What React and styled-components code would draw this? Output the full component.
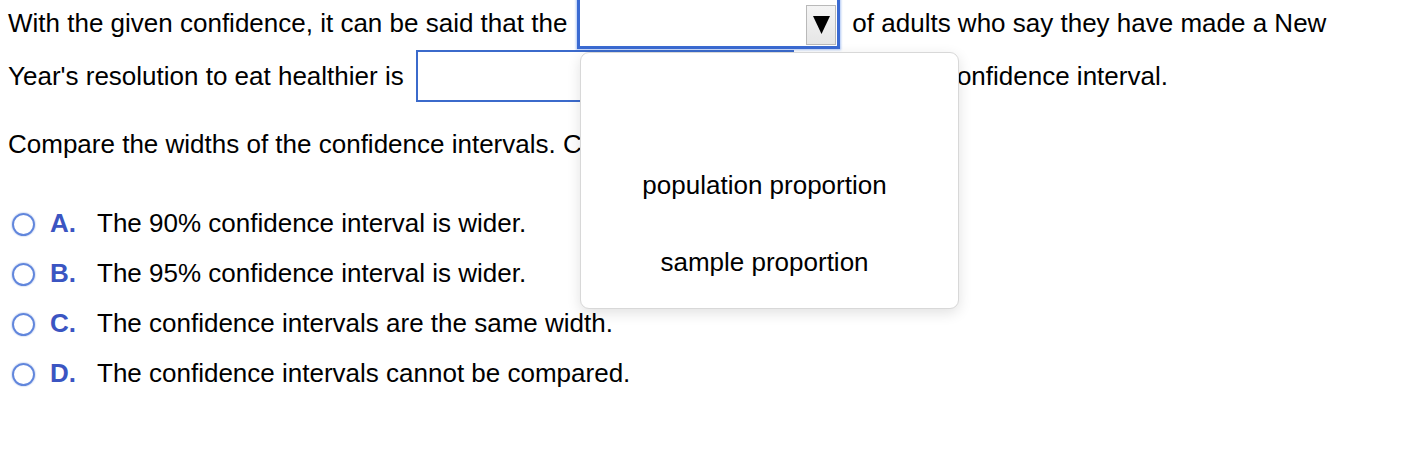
import React from "react";
import styled, { createGlobalStyle } from "styled-components";

const Global = createGlobalStyle`
  html, body { margin: 0; padding: 0; background: #fff; }
  body {
    font-family: "Liberation Sans", Arial, Helvetica, sans-serif;
    font-size: 26px;
    color: #000;
    overflow: hidden;
  }
`;

const Page = styled.div`
  position: relative;
  width: 1408px;
  height: 450px;
  padding: 0 8px;
  box-sizing: border-box;
`;

const Content = styled.div`
  margin-top: -3px;
  display: flex;
  flex-direction: column;
`;

const Line = styled.div`
  display: flex;
  align-items: center;
  height: 52px;
  margin-bottom: ${(p) => p.$gap || 0}px;
  white-space: pre;
`;

const SelectBox = styled.div`
  box-sizing: border-box;
  width: ${(p) => p.$w}px;
  height: 52px;
  flex: none;
  margin: 0 ${(p) => p.$mr || 6}px 0 ${(p) => p.$ml || 6}px;
  border: ${(p) => (p.$focus ? "3px solid #3a6ad2" : "2px solid #3b6acb")};
  box-shadow: ${(p) => (p.$focus ? "0 0 2px 1px rgba(80,130,230,0.45)" : "none")};
  background: #fff;
  display: flex;
  align-items: center;
  justify-content: flex-end;
  padding-right: 1px;
`;

const ArrowButton = styled.div`
  box-sizing: border-box;
  width: 30px;
  height: 40px;
  margin-top: 4px;
  border: 1px solid #b9b9b9;
  background: linear-gradient(#f4f4f4, #e6e6e6);
  display: flex;
  align-items: center;
  justify-content: center;
`;

const Question = styled.div`
  height: 52px;
  display: flex;
  align-items: center;
  white-space: pre;
  margin-top: 16px;
  margin-bottom: 28px;
`;

const Options = styled.div`
  display: flex;
  flex-direction: column;
`;

const Option = styled.div`
  display: flex;
  align-items: center;
  height: 50px;
  white-space: pre;
`;

const Radio = styled.span`
  box-sizing: border-box;
  width: 23px;
  height: 23px;
  border-radius: 50%;
  border: 2px solid #6186dc;
  box-shadow: 0 0 1px 1px rgba(120, 150, 220, 0.25);
  margin-left: 4px;
  margin-right: 15px;
  margin-top: 2px;
  flex: none;
`;

const Letter = styled.span`
  color: #3b55c2;
  font-weight: bold;
  width: 47px;
  flex: none;
`;

const Popup = styled.div`
  position: absolute;
  left: 580px;
  top: 55px;
  width: 379px;
  height: 257px;
  box-sizing: border-box;
  background: #fff;
  border: 1px solid #d8d8d8;
  border-radius: 9px;
  box-shadow: 0 4px 14px rgba(0, 0, 0, 0.12);
  display: flex;
  flex-direction: column;
  align-items: center;
  padding: 117px 10px 0 0;
  gap: 47px;
`;

const PopupItem = styled.div`
  font-size: 26px;
  line-height: 30px;
`;

function Arrow() {
  return (
    <svg width="17" height="18" viewBox="0 0 17 18">
      <polygon points="0,0 17,0 8.5,18" fill="#000" />
    </svg>
  );
}

export default function App() {
  return (
    <Page>
      <Global />
      <Content>
        <Line $gap={1}>
          With the given confidence, it can be said that the
          <SelectBox $w={263} $focus $ml={10} $mr={12}>
            <ArrowButton>
              <Arrow />
            </ArrowButton>
          </SelectBox>
          of adults who say they have made a New
        </Line>
        <Line>
          Year's resolution to eat healthier is
          <SelectBox $w={378} $ml={12} $mr={10} />
          for the 90% confidence interval.
        </Line>
        <Question>
          Compare the widths of the confidence intervals. Choose the correct answer below.
        </Question>
        <Options>
          <Option>
            <Radio />
            <Letter>A.</Letter>
            The 90% confidence interval is wider.
          </Option>
          <Option>
            <Radio />
            <Letter>B.</Letter>
            The 95% confidence interval is wider.
          </Option>
          <Option>
            <Radio />
            <Letter>C.</Letter>
            The confidence intervals are the same width.
          </Option>
          <Option>
            <Radio />
            <Letter>D.</Letter>
            The confidence intervals cannot be compared.
          </Option>
        </Options>
      </Content>
      <Popup>
        <PopupItem>population proportion</PopupItem>
        <PopupItem>sample proportion</PopupItem>
      </Popup>
    </Page>
  );
}
